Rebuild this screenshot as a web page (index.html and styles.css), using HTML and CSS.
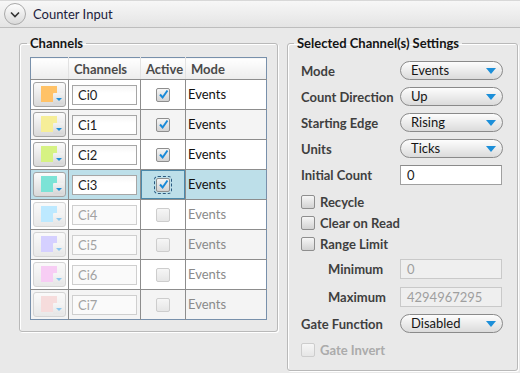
FILE: index.html
```html
<!DOCTYPE html>
<html>
<head>
<meta charset="utf-8">
<link rel="stylesheet" href="styles.css">
</head>
<body>
<div class="header">
  <div class="collapse-btn">
    <svg width="10" height="7" viewBox="0 0 10 7"><path d="M1 1.5 L5 5.5 L9 1.5" fill="none" stroke="#333" stroke-width="1.6"/></svg>
  </div>
  <span class="header-title">Counter Input</span>
</div>
<div class="main">
  <fieldset class="group group-channels">
    <legend class="legend legend-left">Channels</legend>
    <table class="grid">
      <colgroup>
        <col class="c-color"><col class="c-name"><col class="c-active"><col class="c-mode">
      </colgroup>
      <thead>
        <tr><th></th><th>Channels</th><th>Active</th><th>Mode</th></tr>
      </thead>
      <tbody>
        <tr class="odd">
          <td><div class="color-btn"><span class="swatch" style="background:#ffc267"></span><span class="dd"><i></i></span></div></td>
          <td><div class="name-input">Ci0</div></td>
          <td class="center"><span class="cb checked"><svg viewBox="0 0 13 13"><path d="M3 6.5 L5.6 9.5 L10.5 2.5"/></svg></span></td>
          <td class="mode">Events</td>
        </tr>
        <tr class="even">
          <td><div class="color-btn"><span class="swatch" style="background:#f6ee98"></span><span class="dd"><i></i></span></div></td>
          <td><div class="name-input">Ci1</div></td>
          <td class="center"><span class="cb checked"><svg viewBox="0 0 13 13"><path d="M3 6.5 L5.6 9.5 L10.5 2.5"/></svg></span></td>
          <td class="mode">Events</td>
        </tr>
        <tr class="odd">
          <td><div class="color-btn"><span class="swatch" style="background:#d6f283"></span><span class="dd"><i></i></span></div></td>
          <td><div class="name-input">Ci2</div></td>
          <td class="center"><span class="cb checked"><svg viewBox="0 0 13 13"><path d="M3 6.5 L5.6 9.5 L10.5 2.5"/></svg></span></td>
          <td class="mode">Events</td>
        </tr>
        <tr class="selected">
          <td><div class="color-btn"><span class="swatch" style="background:#7ce3d6"></span><span class="dd"><i></i></span></div></td>
          <td><div class="name-input">Ci3</div></td>
          <td class="center focus-cell"><span class="cb checked focused"><svg viewBox="0 0 13 13"><path d="M3 6.5 L5.6 9.5 L10.5 2.5"/></svg></span></td>
          <td class="mode">Events</td>
        </tr>
        <tr class="odd dis">
          <td><div class="color-btn"><span class="swatch" style="background:#bde9ff"></span><span class="dd"><i></i></span></div></td>
          <td><div class="name-input">Ci4</div></td>
          <td class="center"><span class="cb"></span></td>
          <td class="mode">Events</td>
        </tr>
        <tr class="even dis">
          <td><div class="color-btn"><span class="swatch" style="background:#d5d0ff"></span><span class="dd"><i></i></span></div></td>
          <td><div class="name-input">Ci5</div></td>
          <td class="center"><span class="cb"></span></td>
          <td class="mode">Events</td>
        </tr>
        <tr class="odd dis">
          <td><div class="color-btn"><span class="swatch" style="background:#f7cdf4"></span><span class="dd"><i></i></span></div></td>
          <td><div class="name-input">Ci6</div></td>
          <td class="center"><span class="cb"></span></td>
          <td class="mode">Events</td>
        </tr>
        <tr class="even dis">
          <td><div class="color-btn"><span class="swatch" style="background:#f6dcdc"></span><span class="dd"><i></i></span></div></td>
          <td><div class="name-input">Ci7</div></td>
          <td class="center"><span class="cb"></span></td>
          <td class="mode">Events</td>
        </tr>
      </tbody>
    </table>
  </fieldset>

  <fieldset class="group group-settings">
    <legend class="legend legend-right">Selected Channel(s) Settings</legend>
    <div class="row"><span class="label">Mode</span><div class="combo">Events<i></i></div></div>
    <div class="row gap7"><span class="label">Count Direction</span><div class="combo">Up<i></i></div></div>
    <div class="row gap7"><span class="label">Starting Edge</span><div class="combo">Rising<i></i></div></div>
    <div class="row gap7"><span class="label">Units</span><div class="combo">Ticks<i></i></div></div>
    <div class="row gap7"><span class="label">Initial Count</span><div class="field">0</div></div>
    <div class="check-row gap7"><span class="cb"></span><span class="label">Recycle</span></div>
    <div class="check-row"><span class="cb"></span><span class="label">Clear on Read</span></div>
    <div class="check-row"><span class="cb"></span><span class="label">Range Limit</span></div>
    <div class="row gap5"><span class="label indent">Minimum</span><div class="field disabled">0</div></div>
    <div class="row gap9"><span class="label indent">Maximum</span><div class="field disabled">4294967295</div></div>
    <div class="row gap8"><span class="label">Gate Function</span><div class="combo">Disabled<i></i></div></div>
    <div class="check-row gap6 dis"><span class="cb"></span><span class="label">Gate Invert</span></div>
  </fieldset>
</div>
</body>
</html>
```

FILE: styles.css
```css
* { box-sizing: border-box; }
html, body { margin: 0; padding: 0; }
body {
  width: 520px;
  height: 373px;
  overflow: hidden;
  background: #e9e9e9;
  font-family: "Lato", "Liberation Sans", sans-serif;
  font-size: 13px;
  color: #1e1e1e;
}

.header {
  height: 28px;
  display: flex;
  align-items: center;
  padding-left: 4px;
  background: linear-gradient(#f7f7f7, #e4e4e4);
  border-top: 1px solid #d8d8d8;
  border-bottom: 1px solid #bdbdbd;
}
.collapse-btn {
  width: 22px;
  height: 22px;
  border-radius: 50%;
  border: 1px solid #a9a9a9;
  background: linear-gradient(#fdfdfd, #dadada);
  display: flex;
  align-items: center;
  justify-content: center;
}
.header-title {
  margin-left: 7px;
  font-size: 13px;
  color: #1c1c3c;
}

.main {
  display: flex;
  align-items: flex-start;
  padding-left: 19px;
  gap: 9px;
  margin-top: 7px;
}

.group {
  margin: 0;
  border: 1px solid #b9b9b9;
  border-radius: 3px;
  box-shadow: inset 1px 1px 0 #fff, 1px 1px 0 #fff;
  min-width: 0;
}
.group-channels {
  width: 259px;
  padding: 6px 11px 11px 10px;
}
.group-settings {
  width: 231px;
  padding: 10px 13px 10px 13px;
}
.legend {
  font-weight: bold;
  font-size: 13px;
  line-height: 16px;
  padding: 0 3px;
  color: #151515;
}
.legend-left { margin-left: -3px; }
.legend-right { margin-left: -7px; }

/* channel grid */
.grid {
  border-collapse: collapse;
  table-layout: fixed;
  width: 236px;
  border: 1px solid #7890ab;
  background: #fff;
}
.c-color { width: 38px; }
.c-name { width: 72px; }
.c-active { width: 45px; }
.c-mode { width: 81px; }
.grid th {
  height: 22px;
  padding: 0 0 0 5px;
  text-align: left;
  font-weight: bold;
  color: #4a4a4a;
  background: linear-gradient(#ffffff, #ececec);
  border-left: 1px solid #e2e2e2;
  border-bottom: 1px solid #8d8d8d;
}
.grid th:first-child { border-left: none; }
.grid td {
  height: 30px;
  padding: 0;
  border: 1px solid #8d8d8d;
  border-top: none;
}
.grid td:first-child { border-left: none; }
.grid td:last-child { border-right: none; }
.grid tr.even td { background: #f4f4f4; }
.grid tr.odd td { background: #fff; }
.grid tr.selected td { background: #bddfe9; }
.grid tr:last-child td { border-bottom: none; }
.center { text-align: center; }
.mode { padding-left: 2px !important; padding-bottom: 2px !important; color: #111; }
.dis .mode { color: #8a8a8a; }

.color-btn {
  position: relative;
  width: 33px;
  height: 25px;
  margin: 0 0 0 2px;
  border: 1px solid #a5a5a5;
  border-radius: 3px;
  background: linear-gradient(#fbfbfb, #d9d9d9);
}
.swatch {
  position: absolute;
  left: 7px;
  top: 3px;
  width: 16px;
  height: 16px;
}
.dd {
  position: absolute;
  left: 19px;
  top: 10px;
  width: 11px;
  height: 11px;
  background: linear-gradient(#f2f2f2, #d6d6d6);
  border-radius: 1px;
  display: flex;
  align-items: center;
  justify-content: center;
}
.dd i {
  width: 0;
  height: 0;
  border-left: 3px solid transparent;
  border-right: 3px solid transparent;
  border-top: 3px solid #1e8fd8;
  margin-top: 2px;
}
.dis .color-btn {
  border-color: #d4d4d4;
  background: linear-gradient(#fafafa, #e8e8e8);
}
.dis .dd { background: linear-gradient(#f6f6f6, #e6e6e6); }
.dis .dd i { border-top-color: #8cc8ee; }

.name-input {
  width: 65px;
  height: 20px;
  margin-left: 3px;
  border: 1px solid #a6a6a6;
  background: linear-gradient(#f6f6f6, #ffffff 40%);
  padding-left: 5px;
  line-height: 18px;
  color: #1c1c1c;
}
.dis .name-input {
  border-color: #cfcfcf;
  background: #fafafa;
  color: #a2a2a2;
}

.cb {
  display: inline-block;
  width: 14px;
  height: 14px;
  border: 1px solid #8e8e8e;
  border-radius: 2px;
  background: linear-gradient(#f6f6f6, #d2d2d2);
  vertical-align: middle;
  position: relative;
}
.cb svg {
  position: absolute;
  left: 0;
  top: -1px;
  width: 13px;
  height: 13px;
}
.cb svg path {
  fill: none;
  stroke: #1a8ad8;
  stroke-width: 2;
}
.grid .cb { margin-top: -3px; }
.cb.focused { outline: 1px dashed #2a5a80; outline-offset: 1px; }
.focus-cell { box-shadow: inset 0 0 0 1px #4b88aa, inset 0 0 0 2px #bddfe9; }

/* settings */
.row {
  display: flex;
  align-items: center;
  height: 19px;
}
.check-row {
  display: flex;
  align-items: center;
  height: 21px;
}
.check-row .label { margin-left: 5px; }
.gap5 { margin-top: 5px; }
.gap6 { margin-top: 6px; }
.gap7 { margin-top: 7px; }
.gap8 { margin-top: 8px; }
.gap9 { margin-top: 9px; }
.label {
  font-weight: bold;
  color: #3f3f3f;
}
.row .label { width: 99px; }
.row .label.indent { padding-left: 27px; }
.dis .label { color: #ababab; }
.dis .cb { border-color: #cdcdcd; background: linear-gradient(#f6f6f6, #e6e6e6); }

.combo {
  position: relative;
  width: 103px;
  height: 19px;
  border: 1px solid #8a8a8a;
  border-radius: 10px;
  background: linear-gradient(#fdfdfd, #dbdbdb);
  padding-left: 10px;
  line-height: 17px;
  color: #151515;
}
.combo i {
  position: absolute;
  right: 6px;
  top: 6px;
  width: 0;
  height: 0;
  border-left: 5px solid transparent;
  border-right: 5px solid transparent;
  border-top: 6px solid #1c8fd9;
}
.field {
  width: 102px;
  height: 20px;
  border: 1px solid #a0a0a0;
  border-top-color: #8a8a8a;
  background: #fff;
  padding-left: 6px;
  line-height: 18px;
  color: #1c1c1c;
}
.field.disabled {
  background: #efefef;
  border-color: #c9c9c9;
  color: #9f9f9f;
}
```
